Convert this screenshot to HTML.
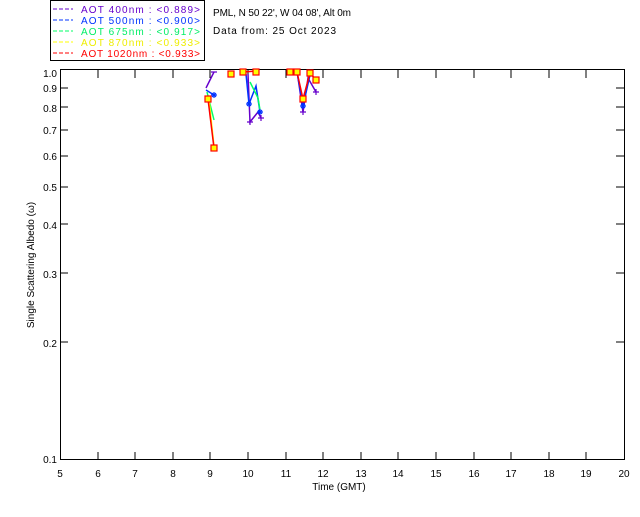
<!DOCTYPE html>
<html><head><style>
body{margin:0;background:#fff;}
svg text{font-family:"Liberation Sans",sans-serif;font-size:10px;}
</style></head><body>
<svg width="640" height="512" xmlns="http://www.w3.org/2000/svg">
<rect width="640" height="512" fill="#fff"/>
<rect x="50.5" y="0.5" width="154" height="60" fill="#fff" stroke="#000" stroke-width="1"/>
<g font-size="10">
<line x1="53" y1="9" x2="73" y2="9" stroke="#6600cc" stroke-dasharray="4,2"/><text x="81" y="13" fill="#6600cc" textLength="119" lengthAdjust="spacing">AOT  400nm : &lt;0.889&gt;</text>
<line x1="53" y1="20" x2="73" y2="20" stroke="#0033ff" stroke-dasharray="4,2"/><text x="81" y="24" fill="#0033ff" textLength="119" lengthAdjust="spacing">AOT  500nm : &lt;0.900&gt;</text>
<line x1="53" y1="31" x2="73" y2="31" stroke="#00ff66" stroke-dasharray="4,2"/><text x="81" y="35" fill="#00ee66" textLength="119" lengthAdjust="spacing">AOT  675nm : &lt;0.917&gt;</text>
<line x1="53" y1="42" x2="73" y2="42" stroke="#ffff00" stroke-dasharray="4,2"/><text x="81" y="46" fill="#eeee00" textLength="119" lengthAdjust="spacing">AOT  870nm : &lt;0.933&gt;</text>
<line x1="53" y1="53" x2="73" y2="53" stroke="#ff0000" stroke-dasharray="4,2"/><text x="81" y="57" fill="#ff0000" textLength="119" lengthAdjust="spacing">AOT 1020nm : &lt;0.933&gt;</text>
</g>
<text x="213" y="16" textLength="138" lengthAdjust="spacing">PML, N 50 22', W 04 08', Alt 0m</text>
<text x="213" y="34" textLength="123" lengthAdjust="spacing">Data from: 25 Oct 2023</text>
<rect x="60.5" y="69.5" width="564" height="390" fill="none" stroke="#000"/>
<g stroke="#000">
<line x1="98" y1="460" x2="98" y2="452"/><line x1="135" y1="460" x2="135" y2="452"/><line x1="173" y1="460" x2="173" y2="452"/><line x1="210" y1="460" x2="210" y2="452"/><line x1="248" y1="460" x2="248" y2="452"/><line x1="286" y1="460" x2="286" y2="452"/><line x1="323" y1="460" x2="323" y2="452"/><line x1="361" y1="460" x2="361" y2="452"/><line x1="398" y1="460" x2="398" y2="452"/><line x1="436" y1="460" x2="436" y2="452"/><line x1="474" y1="460" x2="474" y2="452"/><line x1="511" y1="460" x2="511" y2="452"/><line x1="549" y1="460" x2="549" y2="452"/><line x1="586" y1="460" x2="586" y2="452"/>
<line x1="98" y1="70" x2="98" y2="78"/><line x1="135" y1="70" x2="135" y2="78"/><line x1="173" y1="70" x2="173" y2="78"/><line x1="210" y1="70" x2="210" y2="78"/><line x1="248" y1="70" x2="248" y2="78"/><line x1="286" y1="70" x2="286" y2="78"/><line x1="323" y1="70" x2="323" y2="78"/><line x1="361" y1="70" x2="361" y2="78"/><line x1="398" y1="70" x2="398" y2="78"/><line x1="436" y1="70" x2="436" y2="78"/><line x1="474" y1="70" x2="474" y2="78"/><line x1="511" y1="70" x2="511" y2="78"/><line x1="549" y1="70" x2="549" y2="78"/><line x1="586" y1="70" x2="586" y2="78"/>
<line x1="60" y1="342" x2="68" y2="342"/><line x1="60" y1="273" x2="68" y2="273"/><line x1="60" y1="224" x2="68" y2="224"/><line x1="60" y1="187" x2="68" y2="187"/><line x1="60" y1="156" x2="68" y2="156"/><line x1="60" y1="130" x2="68" y2="130"/><line x1="60" y1="107" x2="68" y2="107"/><line x1="60" y1="88" x2="68" y2="88"/>
<line x1="624" y1="342" x2="616" y2="342"/><line x1="624" y1="273" x2="616" y2="273"/><line x1="624" y1="224" x2="616" y2="224"/><line x1="624" y1="187" x2="616" y2="187"/><line x1="624" y1="156" x2="616" y2="156"/><line x1="624" y1="130" x2="616" y2="130"/><line x1="624" y1="107" x2="616" y2="107"/><line x1="624" y1="88" x2="616" y2="88"/>
</g>
<g text-anchor="end">
<text x="57" y="463">0.1</text><text x="57" y="347">0.2</text><text x="57" y="278">0.3</text><text x="57" y="229">0.4</text><text x="57" y="191">0.5</text><text x="57" y="160">0.6</text><text x="57" y="134">0.7</text><text x="57" y="112">0.8</text><text x="57" y="92">0.9</text><text x="57" y="77">1.0</text>
</g>
<g text-anchor="middle">
<text x="60" y="477">5</text><text x="98" y="477">6</text><text x="135" y="477">7</text><text x="173" y="477">8</text><text x="210" y="477">9</text><text x="248" y="477">10</text><text x="286" y="477">11</text><text x="323" y="477">12</text><text x="361" y="477">13</text><text x="398" y="477">14</text><text x="436" y="477">15</text><text x="474" y="477">16</text><text x="511" y="477">17</text><text x="549" y="477">18</text><text x="586" y="477">19</text><text x="624" y="477">20</text>
<text x="339" y="490">Time (GMT)</text>
<text transform="translate(34,265) rotate(-90)">Single Scattering Albedo (ω)</text>
</g>
<g fill="none" stroke-width="1.5">
<polyline stroke="#6600cc" points="206,88 214,72"/>
<polyline stroke="#6600cc" points="248,74 250,122 258,112 261,118"/>
<polyline stroke="#6600cc" points="297,71 303,112 308,78 316,92"/>
<polyline stroke="#0033ff" points="206,90 214,95"/>
<polyline stroke="#0033ff" points="246,74 249,104 256,86 260,112"/>
<polyline stroke="#0033ff" points="297,72 303,106 310,75"/>
<polyline stroke="#00ff66" points="207,92 214,120"/>
<polyline stroke="#00ff66" points="250,82 258,98 260,110"/>
<polyline stroke="#ffff00" points="209,100 214,146"/>
<polyline stroke="#ff0000" points="208,99 214,148"/>
<polyline stroke="#ff0000" points="243,72 256,71"/>
<polyline stroke="#ff0000" points="297,72 303,99 310,73 316,80"/>
</g>
<g fill="#ffff00" stroke="#ff0000" stroke-width="1.2">
<rect x="205" y="96" width="6" height="6"/><rect x="211" y="145" width="6" height="6"/><rect x="228" y="71" width="6" height="6"/><rect x="240" y="69" width="6" height="6"/><rect x="253" y="69" width="6" height="6"/><rect x="287" y="69" width="6" height="6"/><rect x="294" y="69" width="6" height="6"/><rect x="300" y="96" width="6" height="6"/><rect x="307" y="70" width="6" height="6"/><rect x="313" y="77" width="6" height="6"/>
</g>
<g stroke="#0033ff" stroke-width="1.2">
<path d="M211,95h6M214,92v6M212,93l4,4M216,93l-4,4"/>
<path d="M246,104h6M249,101v6M247,102l4,4M251,102l-4,4"/>
<path d="M257,112h6M260,109v6M258,110l4,4M262,110l-4,4"/>
<path d="M300,106h6M303,103v6M301,104l4,4M305,104l-4,4"/>
</g>
<g stroke="#6600cc" stroke-width="1.2">
<path d="M247,122h6M250,119v6M258,118h6M261,115v6M300,112h6M303,109v6M313,92h6M316,89v6M211,72h6"/>
</g>
</svg>
</body></html>
